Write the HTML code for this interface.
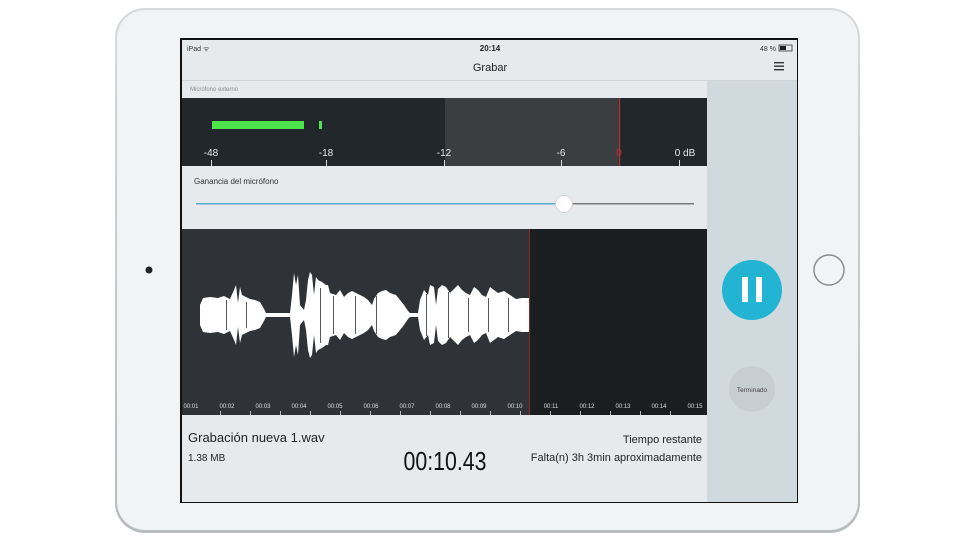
<!DOCTYPE html>
<html><head><meta charset="utf-8"><style>
body{margin:0;width:960px;height:540px;background:#fff;overflow:hidden;font-family:"Liberation Sans",sans-serif}
svg{display:block}
text{font-family:"Liberation Sans",sans-serif}
</style></head><body>
<svg width="960" height="540" viewBox="0 0 960 540">
<defs><linearGradient id="fr" x1="0" x2="0" y1="0" y2="1"><stop offset="0" stop-color="#d6d8da"/><stop offset="1" stop-color="#b9bcbf"/></linearGradient></defs>
<rect x="115" y="8" width="745" height="525" rx="30" fill="url(#fr)"/>
<rect x="117" y="10" width="741" height="520" rx="28" fill="#f1f3f4"/>
<circle cx="149" cy="270" r="3.5" fill="#222"/>
<circle cx="829" cy="270" r="15" fill="#f3f4f5" stroke="#8a8d90" stroke-width="1.5"/>
<rect x="180" y="38" width="618" height="465" fill="#111"/>
<rect x="182" y="40" width="615" height="462" fill="#e6eaec"/>
<text x="187" y="51" font-size="7" fill="#333">iPad ᯤ</text>
<text x="490" y="51" font-size="8" fill="#222" text-anchor="middle" font-weight="bold">20:14</text>
<text x="760" y="51" font-size="7" fill="#333">48 %</text>
<rect x="779" y="45" width="13" height="6" fill="none" stroke="#333" stroke-width="0.8"/><rect x="780" y="46" width="6" height="4" fill="#222"/>
<text x="490" y="71" font-size="11" fill="#222" text-anchor="middle">Grabar</text>
<rect x="774" y="62" width="10" height="1.4" fill="#333"/><rect x="774" y="65.5" width="10" height="1.4" fill="#333"/><rect x="774" y="69" width="10" height="1.4" fill="#333"/>
<rect x="182" y="80" width="615" height="1" fill="#cfd4d7"/>
<rect x="707" y="81" width="90" height="421" fill="#cfd9de"/>
<text x="190" y="91" font-size="6" fill="#888">Micrófono externo</text>
<rect x="182" y="98" width="525" height="68" fill="#22272b"/>
<rect x="445" y="98" width="175" height="68" fill="#3b3e41"/>
<rect x="619" y="98" width="1.2" height="68" fill="#b0302c"/>
<rect x="212" y="121" width="92" height="8" fill="#4ee44e"/>
<rect x="319" y="121" width="3" height="8" fill="#4ee44e"/>
<g font-size="10" fill="#e8e8e8" text-anchor="middle">
<text x="211" y="156">-48</text><text x="326" y="156">-18</text><text x="444" y="156">-12</text><text x="561" y="156">-6</text><text x="619" y="156" fill="#c03030">0</text><text x="685" y="156">0 dB</text></g>
<g fill="#ddd"><rect x="211" y="160" width="1" height="6"/><rect x="326" y="160" width="1" height="6"/><rect x="444" y="160" width="1" height="6"/><rect x="561" y="160" width="1" height="6"/><rect x="679" y="160" width="1" height="6"/></g>
<text x="194" y="184" font-size="8" fill="#333">Ganancia del micrófono</text>
<rect x="196" y="203" width="368" height="1.5" fill="#5aaccf"/>
<rect x="564" y="203" width="130" height="1.5" fill="#777"/>
<circle cx="564" cy="204" r="8.5" fill="#fff" stroke="#ccc" stroke-width="0.8"/>
<rect x="182" y="229" width="347" height="186" fill="#2f3337"/>
<rect x="529" y="229" width="178" height="186" fill="#1b1e20"/>
<rect x="529" y="229" width="1" height="186" fill="#8a2a28"/>
<polygon fill="#fff" points="200,305 203,298 210,297 218,298 224,296 230,299 234,290 236,285 238,303 240,287 242,295 246,297 250,299 255,300 260,302 264,309 266,313 290,313 292,295 294,273 296,285 298,275 300,305 304,310 306,300 308,280 310,272 312,275 314,295 316,277 318,280 322,282 326,285 328,285 330,293 336,295 340,290 344,297 348,293 352,291 356,293 360,295 364,297 368,300 372,305 374,299 378,293 382,291 386,290 390,293 396,295 400,300 404,305 408,311 410,313 418,313 420,300 424,290 428,295 430,285 434,287 436,305 438,289 442,285 446,287 450,293 454,289 458,285 462,290 466,293 470,295 474,287 478,290 482,295 486,297 490,287 494,290 498,293 504,291 510,295 516,299 522,298 529,298 529,332 522,332 516,331 510,335 504,339 498,337 494,340 490,343 486,333 482,335 478,340 474,343 470,335 466,337 462,340 458,345 454,341 450,337 446,343 442,345 438,341 436,325 434,343 430,345 428,335 424,340 420,330 418,317 410,317 408,319 404,325 400,330 396,335 390,337 386,340 382,339 378,337 374,331 372,325 368,330 364,333 360,335 356,337 352,339 348,337 344,333 340,340 336,335 330,337 328,345 326,345 322,348 318,350 316,353 314,335 312,355 310,358 308,350 306,330 304,320 300,325 298,355 296,345 294,357 292,335 290,317 266,317 264,321 260,328 255,330 250,331 246,333 242,335 240,343 238,327 236,345 234,340 230,331 224,334 218,332 210,333 203,332 200,325"/>
<g fill="#2f3337"><rect x="226" y="300" width="0.8" height="30"/><rect x="246" y="302" width="0.8" height="26"/><rect x="320" y="288" width="0.8" height="55"/><rect x="333" y="296" width="0.8" height="38"/><rect x="355" y="296" width="0.8" height="38"/><rect x="376" y="296" width="0.8" height="38"/><rect x="426" y="294" width="0.8" height="42"/><rect x="448" y="292" width="0.8" height="46"/><rect x="468" y="298" width="0.8" height="34"/><rect x="488" y="298" width="0.8" height="34"/><rect x="508" y="298" width="0.8" height="34"/></g>
<g font-size="6" fill="#ddd" text-anchor="middle">
<text x="191" y="408">00:01</text><text x="227" y="408">00:02</text><text x="263" y="408">00:03</text><text x="299" y="408">00:04</text><text x="335" y="408">00:05</text><text x="371" y="408">00:06</text><text x="407" y="408">00:07</text><text x="443" y="408">00:08</text><text x="479" y="408">00:09</text><text x="515" y="408">00:10</text><text x="551" y="408">00:11</text><text x="587" y="408">00:12</text><text x="623" y="408">00:13</text><text x="659" y="408">00:14</text><text x="695" y="408">00:15</text></g>
<g fill="#bbb"><rect x="220" y="411" width="1" height="4"/><rect x="250" y="411" width="1" height="4"/><rect x="280" y="411" width="1" height="4"/><rect x="310" y="411" width="1" height="4"/><rect x="340" y="411" width="1" height="4"/><rect x="370" y="411" width="1" height="4"/><rect x="400" y="411" width="1" height="4"/><rect x="430" y="411" width="1" height="4"/><rect x="460" y="411" width="1" height="4"/><rect x="490" y="411" width="1" height="4"/><rect x="520" y="411" width="1" height="4"/><rect x="550" y="411" width="1" height="4"/><rect x="580" y="411" width="1" height="4"/><rect x="610" y="411" width="1" height="4"/><rect x="640" y="411" width="1" height="4"/><rect x="670" y="411" width="1" height="4"/></g>
<rect x="182" y="415" width="525" height="87" fill="#e6eaed"/>
<text x="188" y="442" font-size="13" fill="#222">Grabación nueva 1.wav</text>
<text x="188" y="461" font-size="10" fill="#222">1.38 MB</text>
<text x="445" y="470" font-size="26" fill="#111" text-anchor="middle" transform="translate(445 0) scale(0.82 1) translate(-445 0)">00:10.43</text>
<text x="702" y="443" font-size="11" fill="#222" text-anchor="end">Tiempo restante</text>
<text x="702" y="461" font-size="11" fill="#222" text-anchor="end">Falta(n) 3h 3min aproximadamente</text>
<circle cx="752" cy="290" r="30" fill="#23b3d3"/>
<rect x="742" y="277" width="6" height="25" fill="#fff"/><rect x="756" y="277" width="6" height="25" fill="#fff"/>
<circle cx="752" cy="389" r="23" fill="#c7ced2"/>
<text x="752" y="392" font-size="6.5" fill="#444" text-anchor="middle">Terminado</text>
</svg>
</body></html>
